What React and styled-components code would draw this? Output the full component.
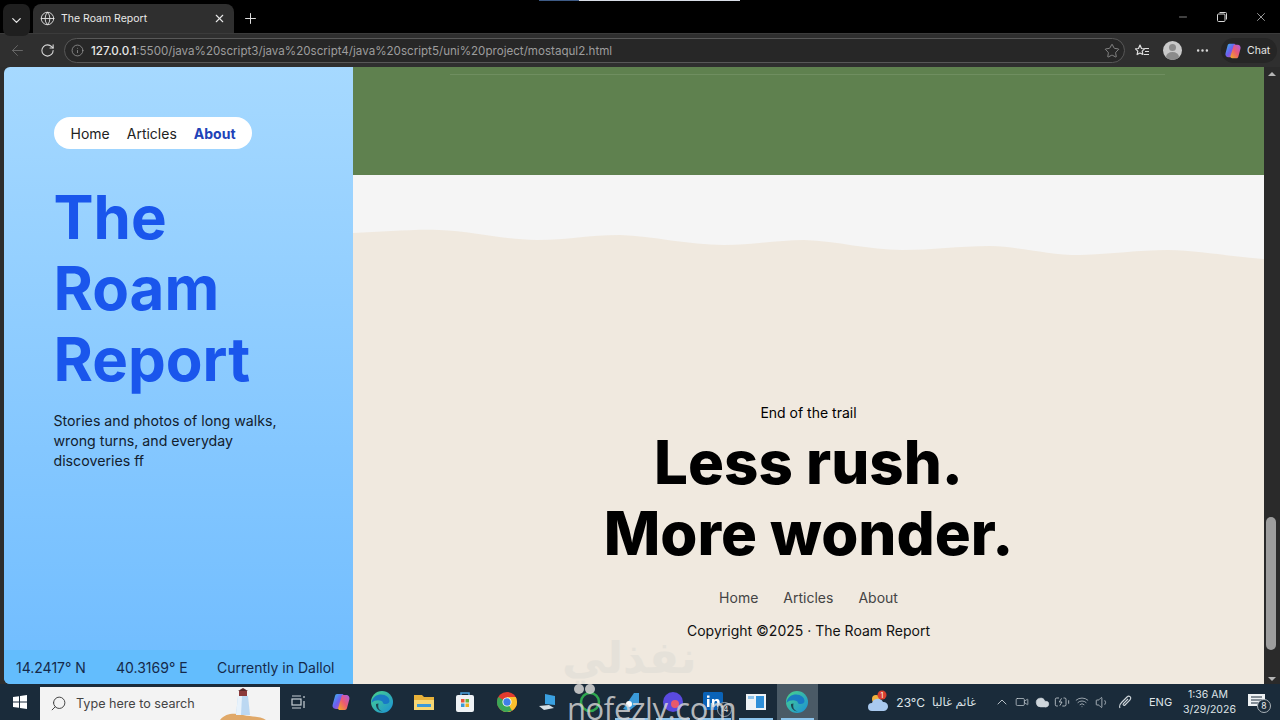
import React from "react";
import styled, { createGlobalStyle } from "styled-components";
import { ChevronDown, X, Plus, ArrowLeft, RotateCw, Info, Star, ListPlus, MoreHorizontal, Minus, Globe, Search, ChevronUp, Volume1, Wifi, Video, Cloud, BatteryCharging } from "lucide-react";

const Global = createGlobalStyle`
  html, body { margin: 0; padding: 0; width: 1280px; height: 720px; overflow: hidden; background: #2d2d2d; }
  * { box-sizing: border-box; }
  body { font-family: Inter, "Noto Sans", sans-serif; }
`;
const Screen = styled.div`position: relative; width: 1280px; height: 720px; display: flex; flex-direction: column; overflow: hidden;`;
const TabBar = styled.div`height: 33px; background: #000; display: flex; align-items: flex-end; padding-left: 3px; flex: none; position: relative;`;
const ShareStrip = styled.div`position: absolute; top: 0; left: 539px; width: 201px; height: 1px; background: linear-gradient(90deg, #3d5a85 20%, #d8dde6 20%);`;
const TabMenu = styled.div`width: 27px; height: 32px; background: #1f1f1f; border-radius: 7px; color: #e6e6e6; display: flex; align-items: center; justify-content: center; margin-bottom: -3px;`;
const Tab = styled.div`width: 201px; height: 29px; margin-left: 3px; background: #2f2f2f; border-radius: 8px 8px 0 0; display: flex; align-items: center; padding: 0 8px 0 7px; color: #e8e8e8; font: 10.5px "Inter", sans-serif;`;
const TabTitle = styled.span`flex: 1; margin-left: 6px; white-space: nowrap;`;
const NewTab = styled.div`width: 33px; height: 29px; display: flex; align-items: center; justify-content: center; color: #e0e0e0;`;
const WindowControls = styled.div`margin-left: auto; display: flex; height: 33px; align-items: center; color: #d8d8d8;`;
const WindowButton = styled.div`width: 39px; display: flex; justify-content: center;`;
const Toolbar = styled.div`height: 34px; flex: none; background: #2f2f2f; border-top: 1px solid #3b3b3b; display: flex; align-items: center; color: #d8d8d8;`;
const NavIcon = styled.div`width: 30px; display: flex; justify-content: center; color: ${p => p.$dim ? "#6b6b6b" : "#dadada"}; margin-left: ${p => p.$first ? "2px" : "0"};`;
const Address = styled.div`width: 1061px; height: 25px; margin-left: 2px; border: 1px solid #585858; border-radius: 12.5px; background: #272727; display: flex; align-items: center; padding: 0 4px 0 6px; color: #9a9a9a;`;
const Url = styled.span`flex: 1; margin-left: 7px; font: 11.6px "Inter", sans-serif; color: #9d9d9d; white-space: nowrap;`;
const UrlHost = styled.span`color: #e8e8e8; font-weight: 500;`;
const ToolIcons = styled.div`display: flex; align-items: center; margin-left: 2px;`;
const ToolSlot = styled.div`width: 30px; display: flex; justify-content: center; align-items: center;`;
const Avatar = styled.div`width: 19px; height: 19px; border-radius: 50%; background: #c9c9c9; position: relative; overflow: hidden;
  &::before { content: ""; position: absolute; left: 6px; top: 3px; width: 7px; height: 7px; border-radius: 50%; background: #8b8b8b; }
  &::after { content: ""; position: absolute; left: 3px; top: 11px; width: 13px; height: 10px; border-radius: 50%; background: #8b8b8b; }`;
const ChatPill = styled.div`margin-left: 4px; width: 56px; height: 25px; border-radius: 13px; background: #262626; display: flex; align-items: center; padding-left: 3px; gap: 5px; font: 10.5px "Inter", sans-serif; color: #e6e6e6;`;
const Viewport = styled.div`flex: 1; display: flex; padding-left: 4px; min-height: 0;`;
const Sidebar = styled.aside`width: 349px; flex: none; display: flex; flex-direction: column; border-radius: 6px 0 0 6px; overflow: hidden; background: linear-gradient(180deg, #a6d9ff 0%, #6fbcff 100%);`;
const SideBody = styled.div`flex: 1; padding: 50px 0 0 49.5px;`;
const Pill = styled.nav`display: inline-flex; height: 32px; align-items: center; gap: 17px; padding: 0 16px 0 17px; background: #fff; border-radius: 16px; font-size: 14px; color: #222;`;
const PillLink = styled.span`font-weight: ${p => p.$active ? 700 : 400}; color: ${p => p.$active ? "#2142b8" : "#222"};`;
const Title = styled.h1`margin: 33px 0 0; font-size: 60px; line-height: 71px; font-weight: 700; color: #1a56ec; width: 220px;`;
const Lede = styled.p`margin: 16px 0 0; width: 230px; font-size: 14.2px; line-height: 20px; color: #12202e;`;
const Coords = styled.div`height: 34px; flex: none; background: #63bdfd; display: flex; align-items: center; padding-left: 12px; font-size: 14px; color: #15294a;`;
const Coord = styled.span`width: ${p => p.$w}px; white-space: nowrap;`;
const Main = styled.main`width: 911px; flex: none; display: flex; flex-direction: column; background: #f0e9df;`;
const GreenBand = styled.div`height: 108px; flex: none; background: #5f814f; position: relative;
  &::before { content: ""; position: absolute; top: 7px; left: 97px; width: 715px; height: 1px; background: #6f8e60; }`;
const Wave = styled.svg`display: block; width: 911px; height: 85px; flex: none;`;
const Closing = styled.section`flex: 1; display: flex; flex-direction: column; align-items: center; justify-content: flex-end; padding-bottom: 43px; color: #000;`;
const Eyebrow = styled.div`font-size: 14px; line-height: 20px;`;
const Slogan = styled.h2`margin: 4px 0 0; font-size: 60px; line-height: 71px; font-weight: 800; text-align: center; color: #000;`;
const FootNav = styled.nav`display: flex; gap: 25px; margin-top: 19px; font-size: 14px; line-height: 20px; color: #444;`;
const Copyright = styled.div`margin-top: 13px; font-size: 14px; line-height: 20px; color: #111;`;
const Scrollbar = styled.div`width: 16px; flex: none; background: #2a2a2a; display: flex; flex-direction: column; align-items: center; justify-content: space-between; padding: 5px 0 3px; position: relative;`;
const ScrollThumb = styled.div`position: absolute; left: 2px; top: 450px; width: 10px; height: 133px; border-radius: 5px; background: #9d9d9d;`;
const Arrow = styled.div`width: 0; height: 0; border-left: 4px solid transparent; border-right: 4px solid transparent; ${p => p.$down ? "border-top: 4px solid #b5b5b5;" : "border-bottom: 4px solid #b5b5b5;"}`;
const Taskbar = styled.footer`height: 36px; flex: none; background: #1a2b3a; display: flex; align-items: stretch; position: relative;`;
const Start = styled.div`width: 40px; display: flex; align-items: center; justify-content: center;`;
const SearchBox = styled.div`width: 240px; margin-top: 3px; background: #f3f3f3; display: flex; align-items: center; padding-left: 10px; gap: 9px; font-size: 12.6px; color: #444; position: relative; overflow: hidden;`;
const Lighthouse = styled.svg`position: absolute; left: 180px; top: 0;`;
const Apps = styled.div`display: flex; margin-left: -1.5px;`;
const AppSlot = styled.div`width: 41.5px; display: flex; align-items: center; justify-content: center; position: relative; background: ${p => p.$selected ? "#4a5a66" : "transparent"};
  ${p => p.$open ? `&::after { content: ""; position: absolute; left: 4px; right: 4px; bottom: 0; height: 2px; background: #8cc4ec; }` : ""}`;
const Badge = styled.span`position: absolute; right: 3px; bottom: 3px; width: 15px; height: 15px; border-radius: 50%; border: 1px solid #9aa5ad; background: #1a2b3a; color: #e0e0e0; font-size: 7.5px; display: flex; align-items: center; justify-content: center;`;
const Tray = styled.div`margin-left: auto; display: flex; align-items: center; color: #dfe4e8; font-size: 12px; padding-right: 3px;`;
const Weather = styled.div`display: flex; align-items: center; gap: 7px; margin-right: 16px; white-space: nowrap;`;
const WeatherArabic = styled.span`font-family: "DejaVu Sans", sans-serif; font-size: 11.5px;`;
const TrayIcon = styled.div`width: ${p => p.$w || 20}px; display: flex; justify-content: center; color: #cfd6db;`;
const Lang = styled.div`font-size: 11px; margin-left: 9px; width: 30px;`;
const Clock = styled.div`width: 50px; margin-left: 4px; text-align: center; font-size: 10.5px; line-height: 15px;`;
const Notify = styled.div`width: 40px; margin-left: 4px; display: flex; justify-content: center; position: relative;`;
const NotifyBadge = styled.span`position: absolute; left: 20px; top: 7px; width: 14px; height: 14px; border-radius: 50%; border: 1px solid #aab2b8; background: #1a2b3a; font-size: 8.5px; display: flex; align-items: center; justify-content: center; color: #eee;`;
const WatermarkArabic = styled.div`position: absolute; left: 562px; top: 632px; font: 700 44px/52px "DejaVu Sans", sans-serif; color: #e5e1d9; pointer-events: none; white-space: nowrap;`;
const Watermark = styled.div`position: absolute; left: 567px; top: 690px; font: 500 31px/36px "Open Sans", sans-serif; color: rgba(215, 215, 215, .82); pointer-events: none; white-space: nowrap; letter-spacing: -.4px;`;
const WatermarkDots = styled.div`position: absolute; left: 574px; top: 684px; display: flex; gap: 1px; pointer-events: none;`;
const WatermarkDot = styled.span`width: 10px; height: 10px; border-radius: 50%; background: rgba(205, 205, 205, .9);`;

const Copilot = ({ s = 18 }) => (
  <svg width={s} height={s} viewBox="0 0 20 20">
    <defs><linearGradient id="cpa" x1="0" y1="0" x2="1" y2="1"><stop offset="0" stopColor="#35c0e8" /><stop offset=".5" stopColor="#6d5df0" /><stop offset="1" stopColor="#e85a8a" /></linearGradient>
    <linearGradient id="cpb" x1="0" y1="1" x2="1" y2="0"><stop offset="0" stopColor="#f0b020" /><stop offset=".5" stopColor="#ee5a70" /><stop offset="1" stopColor="#a95be8" /></linearGradient></defs>
    <path d="M6 2h5c1 0 1.6.6 1.9 1.6L9 17H5C2.5 17 1 15 1.7 12.6L4 4c.3-1.2 1-2 2-2z" fill="url(#cpa)" />
    <path d="M14 18H9c-1 0-1.6-.6-1.9-1.6L11 3h4c2.5 0 4 2 3.300 4.400L16 16c-.3 1.200-1 2-2 2z" fill="url(#cpb)" />
  </svg>
);
const Edge = ({ s = 24 }) => (
  <svg width={s} height={s} viewBox="0 0 24 24">
    <defs><linearGradient id="eg" x1="0" y1="0" x2="1" y2="1"><stop offset="0" stopColor="#4ad48a" /><stop offset="1" stopColor="#1a8fd8" /></linearGradient></defs>
    <circle cx="12" cy="12" r="11" fill="url(#eg)" />
    <path d="M1.500 13C2 7 7 4.500 11 4.500c5 0 8.500 3 8.500 6.500 0 2-1.800 3-4 3-1.500 0-2.500-.5-2.500-1 0-3-8-4-11.500 0z" fill="#1570c8" opacity=".85" />
    <path d="M6 14c-.5 4 3 7.500 7 7.500-4-1-5.500-4-4.500-8z" fill="#1a2b3a" opacity=".8" />
  </svg>
);
const Explorer = () => (
  <svg width="22" height="20" viewBox="0 0 22 20"><path d="M1 3h8l2 2h10v13H1z" fill="#e8b23a" /><path d="M1 8h20v10H1z" fill="#f7d774" /><rect x="4" y="12" width="14" height="3" fill="#3a9ad9" /></svg>
);
const Store = () => (
  <svg width="20" height="22" viewBox="0 0 20 22"><path d="M6 4V2h8v2" stroke="#4aa3e0" fill="none" strokeWidth="1.500" /><rect x="1" y="4" width="18" height="17" rx="2" fill="#eef2f5" /><rect x="6" y="8" width="3.500" height="3.500" fill="#e8553a" /><rect x="10.500" y="8" width="3.500" height="3.500" fill="#6cb33f" /><rect x="6" y="12.500" width="3.500" height="3.500" fill="#3a9ad9" /><rect x="10.500" y="12.500" width="3.500" height="3.500" fill="#f0b020" /></svg>
);
const Chrome = () => (
  <svg width="22" height="22" viewBox="0 0 48 48"><circle cx="24" cy="24" r="22" fill="#e33b2e" /><path d="M24 24L13 43a22 22 0 0 0 11 3 22 22 0 0 0 19-33H24z" fill="#fbc02d" /><path d="M24 24L5 13a22 22 0 0 0 19 33l11-3z" fill="#3aa757" /><circle cx="24" cy="24" r="10" fill="#fff" /><circle cx="24" cy="24" r="8" fill="#3f7fe8" /></svg>
);
const Laptop = () => (
  <svg width="22" height="20" viewBox="0 0 22 20"><path d="M8 2l10 2v9l-10-1z" fill="#3aa0e0" /><path d="M2 14l10-1 5 3-10 2z" fill="#d8dfe4" /></svg>
);
const RingApp = () => (
  <svg width="22" height="22" viewBox="0 0 22 22"><circle cx="11" cy="11" r="9" fill="none" stroke="#2fa84f" strokeWidth="2.500" /></svg>
);
const Zone = () => (
  <svg width="22" height="22" viewBox="0 0 22 22"><path d="M3 18L14 2h5v10L9 20z" fill="#3a9ad9" /><circle cx="9" cy="13" r="3" fill="#fff" /></svg>
);
const Purple = () => (
  <svg width="22" height="22" viewBox="0 0 22 22"><circle cx="11" cy="11" r="10" fill="#5a4ae0" /><circle cx="13" cy="13" r="4" fill="#e85a6a" /></svg>
);
const LinkedIn = () => (
  <svg width="24" height="20" viewBox="0 0 24 20"><rect x="1" y="0" width="20" height="18" rx="1.500" fill="#0a63b8" /><rect x="5" y="7" width="2.500" height="8" fill="#fff" /><rect x="5" y="3.500" width="2.500" height="2.300" fill="#fff" /><path d="M10 7h2.300v1.200C13 7.300 14 7 15 7c2 0 2.700 1.300 2.700 3.300V15h-2.500v-4.300c0-1-.4-1.600-1.300-1.600-1 0-1.500.7-1.500 1.700V15H10z" fill="#fff" /></svg>
);
const Panel = () => (
  <svg width="20" height="16" viewBox="0 0 20 16"><rect width="20" height="16" fill="#eef2f5" /><rect x="10" y="2" width="8" height="12" fill="#2f8fd8" /><rect x="2" y="2" width="6" height="3" fill="#8fc4ec" /></svg>
);
const CloudSun = () => (
  <svg width="22" height="24" viewBox="0 0 22 24"><circle cx="9" cy="9" r="4" fill="#f2b33d" /><path d="M5 21a4 4 0 0 1 0-8 6 6 0 0 1 11-1 4.500 4.500 0 0 1 1 9z" fill="#a9c9ee" /><circle cx="15" cy="5" r="4.500" fill="#d8402f" /><text x="15" y="7.500" fontSize="7" fill="#fff" textAnchor="middle" fontFamily="Inter">1</text></svg>
);
const Pen = () => (
  <svg width="16" height="16" viewBox="0 0 16 16" fill="none" stroke="#cfd6db" strokeWidth="1.100"><path d="M2 14c-1-2 0-4 2-6l5-5c2-2 5 0 3 3L7 11c-1 1-2.500 0-1.500-1.500L10 5" /></svg>
);
const Message = () => (
  <svg width="20" height="20" viewBox="0 0 20 20"><path d="M1 2h17v12h-4v4l-4-4H1z" fill="#eef1f3" /><path d="M4 5h11M4 8h11M4 11h7" stroke="#1a2b3a" strokeWidth="1" /></svg>
);
const WinLogo = () => (
  <svg width="14" height="14" viewBox="0 0 14 14" fill="#fff"><path d="M0 2l6-.8V6.600H0zM7 1L14 0v6.600H7zM0 7.400h6v5.400L0 12zM7 7.400h7V14l-7-1z" /></svg>
);
const TaskView = () => (
  <svg width="16" height="14" viewBox="0 0 16 14" fill="none" stroke="#c8d0d6" strokeWidth="1.200"><path d="M1 1h9M1 13h9" /><rect x="1" y="4" width="9" height="6" /><path d="M13 1v2M13 6v7" /></svg>
);
const Restore = () => (
  <svg width="10" height="10" viewBox="0 0 10 10" fill="none" stroke="currentColor"><rect x=".5" y="2" width="7.500" height="7.500" rx="1" /><path d="M2.500.5h6a1 1 0 0 1 1 1v6" /></svg>
);
const FavoritesIcon = () => (
  <svg width="16" height="16" viewBox="0 0 16 16" fill="none" stroke="#e0e0e0" strokeWidth="1.200" strokeLinejoin="round"><path d="M6 2l1.500 3.500 3 .3-2.300 2.300.7 3.400L6 10l-2.900 1.500.7-3.400L1.500 5.800l3-.3zM10.500 5.500h4.500M11 8.500h4M10 11.500h5" /></svg>
);
const LighthouseArt = () => (
  <Lighthouse width="46" height="33" viewBox="0 0 46 33">
    <path d="M0 33c6-7 14-7 23-5s17 1 23 5z" fill="#e0a868" />
    <path d="M18 9h10l2 19H16z" fill="#bcd8f2" />
    <path d="M18 9h4l-1 19h-5z" fill="#e8f2fb" />
    <rect x="19" y="4" width="8" height="5" fill="#8c3a3a" />
    <path d="M18 4l5-3 5 3z" fill="#5c2a2a" />
  </Lighthouse>
);

const apps = [
  { el: <TaskView /> }, { el: <Copilot s={20} /> }, { el: <Edge /> }, { el: <Explorer /> }, { el: <Store /> }, { el: <Chrome /> },
  { el: <Laptop /> }, { el: <RingApp /> }, { el: <Zone />, open: true }, { el: <Purple />, open: true },
  { el: <LinkedIn />, open: true, badge: 14 }, { el: <Panel />, open: true }, { el: <Edge />, open: true, selected: true },
];

export default function App() {
  return (
    <Screen>
      <Global />
      <TabBar>
        <ShareStrip />
        <TabMenu><ChevronDown size={15} /></TabMenu>
        <Tab>
          <Globe size={15} strokeWidth={1.4} />
          <TabTitle>The Roam Report</TabTitle>
          <X size={13} />
        </Tab>
        <NewTab><Plus size={17} strokeWidth={1.4} /></NewTab>
        <WindowControls>
          <WindowButton><Minus size={12} strokeWidth={1.2} /></WindowButton>
          <WindowButton><Restore /></WindowButton>
          <WindowButton><X size={14} strokeWidth={1.2} /></WindowButton>
        </WindowControls>
      </TabBar>
      <Toolbar>
        <NavIcon $dim $first><ArrowLeft size={17} strokeWidth={1.3} /></NavIcon>
        <NavIcon><RotateCw size={15} strokeWidth={1.7} /></NavIcon>
        <Address>
          <Info size={13} strokeWidth={1.4} />
          <Url><UrlHost>127.0.0.1</UrlHost>:5500/java%20script3/java%20script4/java%20script5/uni%20project/mostaqul2.html</Url>
          <Star size={16} strokeWidth={1.2} />
        </Address>
        <ToolIcons>
          <ToolSlot><FavoritesIcon /></ToolSlot>
          <ToolSlot><Avatar /></ToolSlot>
          <ToolSlot><MoreHorizontal size={15} /></ToolSlot>
        </ToolIcons>
        <ChatPill><Copilot /><span>Chat</span></ChatPill>
      </Toolbar>
      <Viewport>
        <Sidebar>
          <SideBody>
            <Pill>
              <PillLink>Home</PillLink>
              <PillLink>Articles</PillLink>
              <PillLink $active>About</PillLink>
            </Pill>
            <Title>The Roam Report</Title>
            <Lede>Stories and photos of long walks, wrong turns, and everyday discoveries ff</Lede>
          </SideBody>
          <Coords>
            <Coord $w={100}>14.2417° N</Coord>
            <Coord $w={101}>40.3169° E</Coord>
            <Coord $w={112}>Currently in Dallol</Coord>
          </Coords>
        </Sidebar>
        <Main>
          <GreenBand />
          <Wave viewBox="0 0 911 85" preserveAspectRatio="none">
            <rect width="911" height="85" fill="#f5f5f5" />
            <path d="M0 58C30 57 60 54 86 55C120 56 150 65 184 65C215 65 235 60 267 60C300 61 335 70 371 70C400 70 425 65 451 65C485 66 515 75 549 75C580 75 605 71 637 71C670 72 695 80 727 80C760 79 785 75 815 75C850 76 880 82 911 84L911 85L0 85Z" fill="#f0e9df" />
          </Wave>
          <Closing>
            <Eyebrow>End of the trail</Eyebrow>
            <Slogan>Less rush.<br />More wonder.</Slogan>
            <FootNav><span>Home</span><span>Articles</span><span>About</span></FootNav>
            <Copyright>Copyright ©2025 · The Roam Report</Copyright>
          </Closing>
        </Main>
        <Scrollbar>
          <Arrow />
          <ScrollThumb />
          <Arrow $down />
        </Scrollbar>
      </Viewport>
      <Taskbar>
        <Start><WinLogo /></Start>
        <SearchBox>
          <Search size={17} strokeWidth={1.4} style={{ transform: "scaleX(-1)" }} />
          <span>Type here to search</span>
          <LighthouseArt />
        </SearchBox>
        <Apps>
          {apps.map((a, i) => (
            <AppSlot key={i} $open={a.open} $selected={a.selected}>
              {a.el}
              {a.badge ? <Badge>{a.badge}</Badge> : null}
            </AppSlot>
          ))}
        </Apps>
        <Tray>
          <Weather>
            <CloudSun />
            <span>23°C</span>
            <WeatherArabic>غائم غالبا</WeatherArabic>
          </Weather>
          <TrayIcon><ChevronUp size={16} strokeWidth={1.3} /></TrayIcon>
          <TrayIcon><Video size={14} strokeWidth={1.2} /></TrayIcon>
          <TrayIcon><Cloud size={15} fill="#cfd6db" strokeWidth={1} /></TrayIcon>
          <TrayIcon><BatteryCharging size={16} strokeWidth={1.2} /></TrayIcon>
          <TrayIcon><Wifi size={14} strokeWidth={1.2} /></TrayIcon>
          <TrayIcon><Volume1 size={15} strokeWidth={1.2} /></TrayIcon>
          <TrayIcon $w={28}><Pen /></TrayIcon>
          <Lang>ENG</Lang>
          <Clock>1:36 AM<br />3/29/2026</Clock>
          <Notify><Message /><NotifyBadge>8</NotifyBadge></Notify>
        </Tray>
      </Taskbar>
      <WatermarkArabic>نفذلي</WatermarkArabic>
      <WatermarkDots><WatermarkDot /><WatermarkDot /></WatermarkDots>
      <Watermark>nofezly.com</Watermark>
    </Screen>
  );
}
